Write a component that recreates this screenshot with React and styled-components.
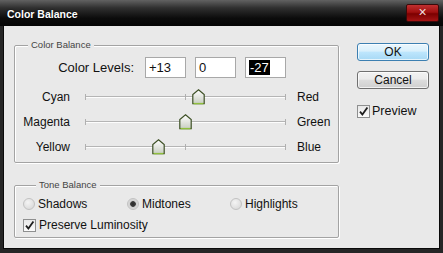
import styled, { createGlobalStyle } from "styled-components";

const GlobalStyle = createGlobalStyle`
  html, body {
    margin: 0;
    padding: 0;
    background: #1e1e1e;
    overflow: hidden;
  }
  * {
    box-sizing: border-box;
  }
`;

const sliders = [
  { left: "Cyan", right: "Red", value: 13 },
  { left: "Magenta", right: "Green", value: 0 },
  { left: "Yellow", right: "Blue", value: -27 },
];

const tones = [
  { label: "Shadows", checked: false },
  { label: "Midtones", checked: true },
  { label: "Highlights", checked: false },
];

const Thumb = ({ x }) => (
  <ThumbWrap style={{ left: x - 6 }}>
    <svg width="13" height="16" viewBox="0 0 13 16">
      <defs>
        <linearGradient id="thumbFill" x1="0" y1="0" x2="0" y2="1">
          <stop offset="0" stopColor="#ffffff" />
          <stop offset="1" stopColor="#c9cec2" />
        </linearGradient>
      </defs>
      <path
        d="M6.5 0.8 L12.2 5.6 L12.2 14.6 L0.8 14.6 L0.8 5.6 Z"
        fill="url(#thumbFill)"
        stroke="#3e5126"
        strokeWidth="1.2"
      />
      <path d="M1.5 14.6 L11.5 14.6" stroke="#8fbf3c" strokeWidth="1.4" />
    </svg>
  </ThumbWrap>
);

const Check = () => (
  <CheckBox>
    <svg width="11" height="11" viewBox="0 0 11 11">
      <path
        d="M2 5.6 L4.4 8.6 L9.4 1.6"
        fill="none"
        stroke="#1e1e1e"
        strokeWidth="1.8"
      />
    </svg>
  </CheckBox>
);

const App = () => {
  return (
    <>
      <GlobalStyle />
      <Window>
        <TitleBar>
          <Title>Color Balance</Title>
          <CloseButton>×</CloseButton>
        </TitleBar>
        <Body>
          <LeftColumn>
            <Group>
              <Legend>Color Balance</Legend>
              <LevelsRow>
                <LevelsLabel>Color Levels:</LevelsLabel>
                <Field>+13</Field>
                <Field>0</Field>
                <Field>
                  <Selected>-27</Selected>
                </Field>
              </LevelsRow>
              {sliders.map((s) => (
                <SliderRow key={s.left}>
                  <SideLabel>{s.left}</SideLabel>
                  <Track>
                    <Tick $pos={0} />
                    <Tick $pos={100} />
                    <Tick $pos={200} />
                    <Thumb x={100 + s.value} />
                  </Track>
                  <EndLabel>{s.right}</EndLabel>
                </SliderRow>
              ))}
            </Group>
            <ToneGroup>
              <Legend>Tone Balance</Legend>
              <RadioRow>
                {tones.map((t) => (
                  <RadioItem key={t.label}>
                    <Radio $checked={t.checked} />
                    <span>{t.label}</span>
                  </RadioItem>
                ))}
              </RadioRow>
              <CheckRow>
                <Check />
                <span>Preserve Luminosity</span>
              </CheckRow>
            </ToneGroup>
          </LeftColumn>
          <RightColumn>
            <Button $primary>OK</Button>
            <Button>Cancel</Button>
            <PreviewRow>
              <Check />
              <span>Preview</span>
            </PreviewRow>
          </RightColumn>
        </Body>
      </Window>
    </>
  );
};

const Window = styled.div`
  width: 443px;
  height: 253px;
  display: flex;
  flex-direction: column;
  background: #262626;
  font-family: "Liberation Sans", Arial, sans-serif;
  font-size: 12px;
  color: #111;
`;

const TitleBar = styled.div`
  height: 26px;
  flex: none;
  display: flex;
  align-items: flex-start;
  justify-content: space-between;
  padding: 0 4px 0 7px;
  background: linear-gradient(#626262 0, #303030 30%, #0c0c0c 70%, #050505 100%);
`;

const Title = styled.div`
  margin-top: 8px;
  font-size: 10.5px;
  font-weight: bold;
  color: #fff;
  text-shadow: 0 0 2px rgba(0, 0, 0, 0.8);
`;

const CloseButton = styled.div`
  margin-top: 4px;
  width: 33px;
  height: 18px;
  border-radius: 2px;
  border: 1px solid #3a0a0a;
  background: linear-gradient(#c03030 0, #a01010 45%, #7c0000 55%, #a41414 100%);
  color: #f2dede;
  font-size: 14px;
  line-height: 15px;
  text-align: center;
`;

const Body = styled.div`
  flex: 1;
  margin: 0 3px 4px;
  background: #e9e9e9;
  border: 1px solid #0a0a0a;
  border-top: none;
  display: flex;
  gap: 18px;
  padding: 13px 0 0 10px;
`;

const LeftColumn = styled.div`
  width: 325px;
  display: flex;
  flex-direction: column;
`;

const Group = styled.fieldset`
  margin: 0;
  padding: 0 0 3px 0;
  border: 1px solid #a3a3a3;
  border-radius: 2px;
  box-shadow: 1px 1px 0 #fff, inset 1px 1px 0 #fff;
`;

const ToneGroup = styled(Group)`
  margin-top: 16px;
  padding: 5px 0 4px 8px;
`;

const Legend = styled.legend`
  margin-left: 13px;
  padding: 0 3px;
  font-size: 9.5px;
  line-height: 12px;
  color: #444;
  background: #e9e9e9;
`;

const LevelsRow = styled.div`
  display: flex;
  align-items: center;
  gap: 9px;
  margin-top: 6px;
  margin-bottom: 6px;
`;

const LevelsLabel = styled.div`
  width: 119px;
  margin-right: 2px;
  text-align: right;
  font-size: 13px;
`;

const Field = styled.div`
  width: 41px;
  height: 21px;
  background: #fff;
  border: 1px solid #a8a8a8;
  padding-left: 3px;
  font-size: 13px;
  line-height: 19px;
`;

const Selected = styled.span`
  background: #000;
  color: #fff;
  padding: 0 1px;
`;

const SliderRow = styled.div`
  display: flex;
  align-items: center;
  height: 25px;
`;

const SideLabel = styled.div`
  width: 55px;
  text-align: right;
  font-size: 12px;
`;

const Track = styled.div`
  position: relative;
  margin-left: 15px;
  width: 200px;
  height: 2px;
  border-top: 1px solid #b5b5b5;
  border-bottom: 1px solid #fdfdfd;
`;

const Tick = styled.div`
  position: absolute;
  left: ${(p) => p.$pos}px;
  top: -3px;
  width: 1px;
  height: 6px;
  background: #b0b0b0;
`;

const ThumbWrap = styled.div`
  position: absolute;
  top: -8px;
  width: 13px;
  height: 16px;
  line-height: 0;
`;

const EndLabel = styled.div`
  margin-left: 12px;
  font-size: 12px;
`;

const RadioRow = styled.div`
  display: grid;
  grid-template-columns: 104px 103px auto;
  height: 16px;
  align-items: center;
`;

const RadioItem = styled.div`
  display: flex;
  align-items: center;
  gap: 3px;
  font-size: 12px;
`;

const Radio = styled.div`
  width: 12px;
  height: 12px;
  border-radius: 50%;
  border: 1px solid #c2c2c2;
  background: ${(p) =>
    p.$checked
      ? "radial-gradient(circle, #2a2a2a 0, #3c3c3c 35%, #cfcfcf 45%, #e4e4e4 100%)"
      : "radial-gradient(circle at 40% 35%, #f4f4f4 0, #d4d4d4 100%)"};
`;

const CheckRow = styled.div`
  display: flex;
  align-items: center;
  gap: 3px;
  height: 16px;
  margin-top: 5px;
  font-size: 12px;
`;

const CheckBox = styled.div`
  width: 13px;
  height: 13px;
  border: 1px solid #8e8f8f;
  background: linear-gradient(#e8e8e8, #fbfbfb);
  display: flex;
  align-items: center;
  justify-content: center;
`;

const RightColumn = styled.div`
  width: 72px;
  display: flex;
  flex-direction: column;
  padding-top: 4px;
`;

const Button = styled.div`
  height: 18px;
  margin-bottom: 10px;
  border-radius: 3px;
  border: 1px solid ${(p) => (p.$primary ? "#3c7fb1" : "#707070")};
  background: ${(p) =>
    p.$primary
      ? "linear-gradient(#eaf6fd 0, #d9f0fc 45%, #bee6fd 50%, #a7d9f5 100%)"
      : "linear-gradient(#f2f2f2 0, #ebebeb 45%, #dddddd 50%, #cfcfcf 100%)"};
  box-shadow: inset 0 0 0 1px rgba(255, 255, 255, 0.7);
  text-align: center;
  font-size: 12px;
  line-height: 16px;
`;

const PreviewRow = styled.div`
  display: flex;
  align-items: center;
  gap: 2px;
  margin-top: 5px;
  font-size: 12.5px;
`;

export default App;
